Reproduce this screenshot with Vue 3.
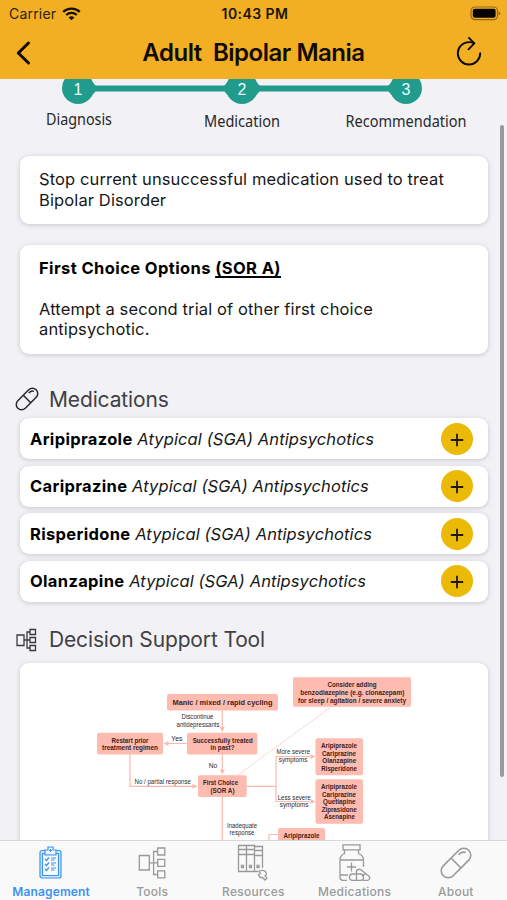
<script setup>
const steps = [
  { n: 1, x: 78, label: 'Diagnosis', lx: 46, w: 66, y: 46 },
  { n: 2, x: 242, label: 'Medication', lx: 204, w: 76, y: 48 },
  { n: 3, x: 406, label: 'Recommendation', lx: 345.5, w: 121, y: 48 },
]

const medications = [
  { name: 'Aripiprazole' },
  { name: 'Cariprazine' },
  { name: 'Risperidone' },
  { name: 'Olanzapine' },
]

// Flowchart boxes: frame plus lines of [text, left, baseline, width]
const boxes = [
  { x: 167, y: 694, w: 111, h: 16.5, big: true, lines: [['Manic / mixed / rapid cycling', 172.5, 705, 100]] },
  { x: 293, y: 677.3, w: 118, h: 29.5, lines: [['Consider adding', 327.5, 687.3, 49], ['benzodiazepine (e.g. clonazepam)', 300.3, 694.9, 104], ['for sleep / agitation / severe anxiety', 298, 702.5, 108]] },
  { x: 97, y: 732.7, w: 66, h: 21.8, lines: [['Restart prior', 111.5, 742.7, 37], ['treatment regimen', 102, 750.4, 56]] },
  { x: 187, y: 732.7, w: 70.3, h: 21.8, lines: [['Successfully treated', 192.7, 742.7, 60], ['in past?', 210.5, 750.4, 24]] },
  { x: 198, y: 775.2, w: 48.7, h: 21.8, lines: [['First Choice', 203, 785.2, 35], ['(SOR A)', 210.5, 792.9, 24]] },
  { x: 315.5, y: 738.2, w: 47.5, h: 37, lines: [['Aripiprazole', 321, 748, 36], ['Cariprazine', 322, 755.6, 34], ['Olanzapine', 322.3, 763.2, 34], ['Risperidone', 321.3, 770.8, 35.5]] },
  { x: 315.5, y: 779.2, w: 47.5, h: 44.5, lines: [['Aripiprazole', 321, 789, 36], ['Cariprazine', 322, 796.6, 34], ['Quetiapine', 323, 804.2, 32.5], ['Ziprasidone', 321.7, 811.8, 35], ['Asenapine', 324, 819.2, 31]] },
  { x: 278, y: 828, w: 47, h: 30, lines: [['Aripiprazole', 283.5, 837.6, 36]] },
]

const notes = [
  ['Discontinue', 181.5, 719.4, 32],
  ['antidepressants', 176.5, 727, 43],
  ['Yes', 171.3, 741.3, 11],
  ['No', 208.7, 768, 8.5],
  ['No / partial response', 134.5, 784.3, 56.5],
  ['More severe', 276.5, 754.3, 33.5],
  ['symptoms', 278.8, 762.1, 28.5],
  ['Less severe', 277.7, 799.8, 33],
  ['symptoms', 279.8, 807.4, 28.5],
  ['Inadequate', 227, 827.7, 30],
  ['response', 229.5, 835.3, 25],
]
</script>

<template>
  <div class="phone">
    <header class="top">
      <div class="status">
        <div class="carrier">
          <span>Carrier</span>
          <svg width="19" height="14" viewBox="0 0 19 14">
            <path d="M1.2 4.9C5.7 .6 13.300 .6 17.800 4.900M4.200 8C7.200 5.200 11.800 5.200 14.800 8" fill="none" stroke="#151006" stroke-width="2.300" />
            <path d="M9.500 13.300L6.600 10.400C8.200 9 10.800 9 12.400 10.400Z" fill="#151006" />
          </svg>
        </div>
        <span class="time">10:43 PM</span>
        <svg class="battery" width="31" height="15" viewBox="0 0 31 15">
          <rect x="1" y="1" width="26.500" height="12.600" rx="3.800" fill="none" stroke="#8f6a1e" stroke-width="1.200" />
          <rect x="2.800" y="2.800" width="22.800" height="9" rx="2" fill="#080500" />
          <path d="M28.600 5.200Q30.300 6 30.300 7.300T28.600 9.500Z" fill="#8f6a1e" />
        </svg>
      </div>
      <div class="nav">
        <svg width="24" height="28" viewBox="0 0 24 28">
          <path d="M17.500 4L7.300 14L17.500 24" fill="none" stroke="#0c0800" stroke-width="3" stroke-linecap="round" stroke-linejoin="round" />
        </svg>
        <h1>Adult&nbsp; Bipolar Mania</h1>
        <svg class="refresh" width="28" height="32" viewBox="0 0 28 32">
          <g fill="none" stroke="#0c0800" stroke-width="1.900" stroke-linecap="round" stroke-linejoin="round">
            <path d="M25.200 16.300A11.200 11.200 0 1 1 14 5.100C16.200 5.100 17.600 5.500 19 6.200" />
            <path d="M14 .9L19.300 6.400L13.500 12.300" />
          </g>
        </svg>
      </div>
    </header>

    <main class="content">
      <svg class="stepper" width="507" height="60" viewBox="0 0 507 60">
        <path d="M78 9.500H406" stroke="#219b8c" stroke-width="6" />
        <path d="M91 1.500L95.500 6.500V12.500L91 17.500ZM229 1.500L224.500 6.500V12.500L229 17.500ZM255 1.500L259.500 6.500V12.500L255 17.500ZM393 1.500L388.500 6.500V12.500L393 17.500Z" fill="#219b8c" />
        <g v-for="s in steps" :key="s.n">
          <circle :cx="s.x" cy="9" r="16" fill="#219b8c" />
          <text :x="s.x" y="15.500" class="num" text-anchor="middle">{{ s.n }}</text>
          <text :x="s.lx" :y="s.y" class="step" :textLength="s.w" lengthAdjust="spacingAndGlyphs">{{ s.label }}</text>
        </g>
      </svg>

      <section class="card notice">
        <p>Stop current unsuccessful medication used to treat<br />Bipolar Disorder</p>
      </section>
      <section class="card choice">
        <p class="lead">First Choice Options <u>(SOR A)</u></p>
        <p class="gap">Attempt a second trial of other first choice<br />antipsychotic.</p>
      </section>

      <h2 class="meds-title">
        <svg width="24" height="24" viewBox="0 0 24 24">
          <g fill="none" stroke="#29282b" stroke-width="1.500" transform="rotate(-45 12 12)">
            <rect x="-1" y="6.700" width="26" height="10.600" rx="5.300" />
            <path d="M12 6.700V17.300M17.500 9Q21.500 8.800 22.300 11.500" />
          </g>
        </svg>
        <span>Medications</span>
      </h2>
      <ul class="meds">
        <li v-for="m in medications" :key="m.name" class="card">
          <span class="med"><b>{{ m.name }}</b> <i>Atypical (SGA) Antipsychotics</i></span>
          <button>
            <svg width="14" height="14" viewBox="0 0 14 14"><path d="M.8 7H13.200M7 .8V13.200" stroke="#1f1a05" stroke-width="1.800" /></svg>
          </button>
        </li>
      </ul>

      <h2 class="tool-title">
        <svg width="24" height="24" viewBox="0 0 24 24">
          <g fill="none" stroke="#3b3a3d" stroke-width="1.300">
            <path d="M2 7H9V17.500H2ZM15 1.500H20.500V6.500H15ZM15 9.500H20.500V14.500H15ZM15 17.500H20.500V22.500H15ZM9 12H15M15 4H12V20H15" />
          </g>
        </svg>
        <span>Decision Support Tool</span>
      </h2>
      <section class="card chart">
        <svg width="468" height="190" viewBox="20 663 468 190">
          <g fill="none" stroke="#fbb9ae" stroke-width="1.200">
            <path d="M222.300 710V728M187 743.500H167M222.300 754V771M130 754V786.300H194M246 786.300H276M310 756.500H276V801.500H310M222.300 797V853M278 834.500H269V853" />
            <path d="M238 775L331 707" stroke-dasharray="1.600 1" stroke-width=".9" />
          </g>
          <path d="M219.800 727H224.800L222.300 732ZM168.500 741V746L163.500 743.500ZM219.800 769.500H224.800L222.300 774.500ZM192.500 783.800V788.800L197.500 786.300ZM310.500 754V759L315.500 756.500ZM310.500 799V804L315.500 801.500Z" fill="#fbb9ae" />
          <g v-for="(b, i) in boxes" :key="i">
            <rect :x="b.x" :y="b.y" :width="b.w" :height="b.h" rx="2" fill="#febbb0" />
            <text v-for="(l, j) in b.lines" :key="j" :x="l[1]" :y="l[2]" :textLength="l[3]" lengthAdjust="spacingAndGlyphs" :class="['box-text', { big: b.big }]">{{ l[0] }}</text>
          </g>
          <text v-for="(l, i) in notes" :key="i" :x="l[1]" :y="l[2]" :textLength="l[3]" lengthAdjust="spacingAndGlyphs" class="note">{{ l[0] }}</text>
        </svg>
      </section>
      <div class="scrollbar"></div>
    </main>

    <nav class="tabs">
      <a class="active">
        <svg width="36" height="38" viewBox="0 0 36 38">
          <g fill="none" stroke="currentColor" stroke-width="1.200">
            <rect x="7" y="6.500" width="21" height="27.500" rx="2" fill="#d3e8fd" />
            <path d="M11.500 9.500H9.500V31.500H25.500V9.500H23.500M12 11V6H15V3H20V6H23V11ZM17.500 5V8M16 6.500H19" fill="#f9f9f9" />
            <path d="M12 15L13.500 16.500L16 13.500M12 20L13.500 21.500L16 18.500M12 25L13.500 26.500L16 23.500M18 14H23M18 16H21.500M18 19H23M18 21H21.500M18 24H23M18 26H21.500" />
          </g>
        </svg>
        <span>Management</span>
      </a>
      <a>
        <svg width="36" height="38" viewBox="0 0 36 38">
          <path d="M5.300 11.500H15.300V26H5.300ZM23.700 4H30.800V11H23.700ZM23.700 15.300H30.800V22.300H23.700ZM23.700 26.800H30.800V33.800H23.700ZM15.300 18.800H23.700M23.700 7.500H19.600V30.500H23.700" fill="none" stroke="currentColor" stroke-width="1.300" />
        </svg>
        <span>Tools</span>
      </a>
      <a>
        <svg width="36" height="38" viewBox="0 0 36 38">
          <g fill="none" stroke="currentColor" stroke-width="1.300">
            <path d="M3.500 27.500V1.500H11.500V27.500M11.500 27.500V1.500H19.500V27.500M19.500 2.500H27.500V24M3 27.500H23M3.500 5.500H11.500M3.500 10.500H11.500M11.500 5.500H19.500M11.500 10.500H19.500M19.500 6.500H27.500M19.500 11.500H27.500" />
            <path d="M6.500 21.500H8.500V23.500H6.500ZM14.500 21.500H16.500V23.500H14.500ZM22 21.500H24V23.500H22Z" />
            <path d="M24 27Q28 25.500 30.500 27.500Q32.500 30.500 30 32L32 34L30 36L27.500 33.500H25L23.500 30.500L25.500 29.500Z" />
          </g>
        </svg>
        <span>Resources</span>
      </a>
      <a>
        <svg width="36" height="38" viewBox="0 0 36 38">
          <g fill="none" stroke="currentColor" stroke-width="1.300">
            <path d="M6 .8H23V5.800H6ZM7.500 6V9.500Q3 11.500 3 16V33.500Q3 36.300 6 36.300H10M21.500 6V9.500Q26.500 11.500 26.500 16V23M3 16H26.500M3 31H11M14.500 18.500V27.500M10 23H19" />
            <rect x="12.500" y="30" width="14" height="6.300" rx="3.150" />
            <path d="M19.500 30V36.300M19.500 29.500C18.500 26 22.500 23.800 24.800 26.500L32 32.300C34.200 34.500 31.500 37 29 36.300H25.500M25 32L28.500 29.500" />
          </g>
        </svg>
        <span>Medications</span>
      </a>
      <a>
        <svg width="36" height="38" viewBox="0 0 36 38">
          <g fill="none" stroke="currentColor" stroke-width="1.600" transform="translate(18 19) rotate(-45)">
            <rect x="-18" y="-7" width="36" height="14" rx="7" />
            <path d="M0 -7V7M7.500 -4Q12.500 -4.500 14.300 -.5" />
          </g>
        </svg>
        <span>About</span>
      </a>
    </nav>
  </div>
</template>

<style>
body { margin: 0; overflow: hidden; }
</style>

<style scoped>
* { box-sizing: border-box; }
.phone { width: 507px; height: 900px; display: flex; flex-direction: column; overflow: hidden; background: #f2f1f5; font-family: Inter, "Liberation Sans", sans-serif; color: #171717; }
h1, h2, p, ul { margin: 0; padding: 0; }
svg { display: block; flex: none; }
.top { height: 79px; flex: none; background: #f2af24; }
.status { height: 27px; display: grid; grid-template-columns: 1fr auto 1fr; align-items: center; padding: 0 6px 0 9px; font-size: 14px; color: #2a1f08; }
.carrier { display: flex; align-items: center; gap: 6px; letter-spacing: .2px; }
.time { font-weight: 600; font-size: 14px; color: #1c1404; letter-spacing: .45px; }
.battery { justify-self: end; }
.nav { height: 52px; display: grid; grid-template-columns: 1fr auto 1fr; align-items: center; padding: 0 24px 0 11px; }
.refresh { justify-self: end; }
h1 { font-size: 24px; font-weight: 600; line-height: 30px; color: #110b00; letter-spacing: -.48px; white-space: nowrap; position: relative; left: 6.500px; }
.content { height: 761px; flex: none; position: relative; overflow: hidden; }
.num { font: 16px "Liberation Sans", sans-serif; fill: #e8fffb; }
.step { font: 15.500px "Noto Sans", sans-serif; fill: #29292c; }
.card { background: #fff; border-radius: 9px; box-shadow: 0 1px 5px rgba(0, 0, 0, .18); margin: 0 19px 0 20px; }
.notice { margin-top: 17px; height: 68px; padding: 13px 19px; }
.notice p { line-height: 20.700px; }
.choice { margin-top: 21px; height: 109px; padding: 13px 19px; }
p { font-size: 16.500px; line-height: 20.300px; white-space: nowrap; letter-spacing: .12px; }
.lead { font-weight: 700; color: #000; letter-spacing: .4px; }
.lead u { text-underline-offset: 2px; text-decoration-thickness: 1.500px; }
.gap { margin-top: 20.300px; }
h2 { display: flex; align-items: center; gap: 10px; padding-left: 15px; height: 30px; font-size: 21px; font-weight: 400; color: #414044; white-space: nowrap; letter-spacing: -.14px; }
.meds-title { margin-top: 30px; }
.meds { margin-top: 4px; list-style: none; display: flex; flex-direction: column; gap: 6.600px; }
.meds li { height: 41px; display: flex; align-items: center; justify-content: space-between; padding: 0 15px 0 10px; }
.med { font-size: 16.500px; white-space: nowrap; letter-spacing: .1px; }
.med b { font-weight: 700; color: #000; letter-spacing: .34px; }
button { width: 32px; height: 32px; border: 0; border-radius: 50%; padding: 2px 0 0; background: #ebba06; display: flex; align-items: center; justify-content: center; }
.tool-title { margin-top: 23px; }
.chart { margin-top: 8px; height: 190px; overflow: hidden; }
.box-text { font: bold 6.500px "Liberation Sans", sans-serif; fill: #3d1e1a; }
.big { font-size: 7.400px; }
.note { font: 6.500px "Liberation Sans", sans-serif; fill: #2b2b2b; }
.scrollbar { position: absolute; left: 499.500px; top: 46px; width: 4px; height: 652px; border-radius: 2px; background: #9b999e; }
.tabs { height: 60px; flex: none; border-top: 1px solid #d9d9da; background: #f9f9f9; display: grid; grid-template-columns: repeat(5, 101.200px); padding-left: .5px; }
.tabs a { display: flex; flex-direction: column; align-items: center; padding-top: 3px; color: #999; font-size: 12px; font-weight: 500; line-height: 15px; }
.tabs span { margin-top: 1.500px; letter-spacing: .25px; }
.tabs .active { color: #3b93f2; font-weight: 600; }
.tabs .active span { letter-spacing: .15px; }
</style>
